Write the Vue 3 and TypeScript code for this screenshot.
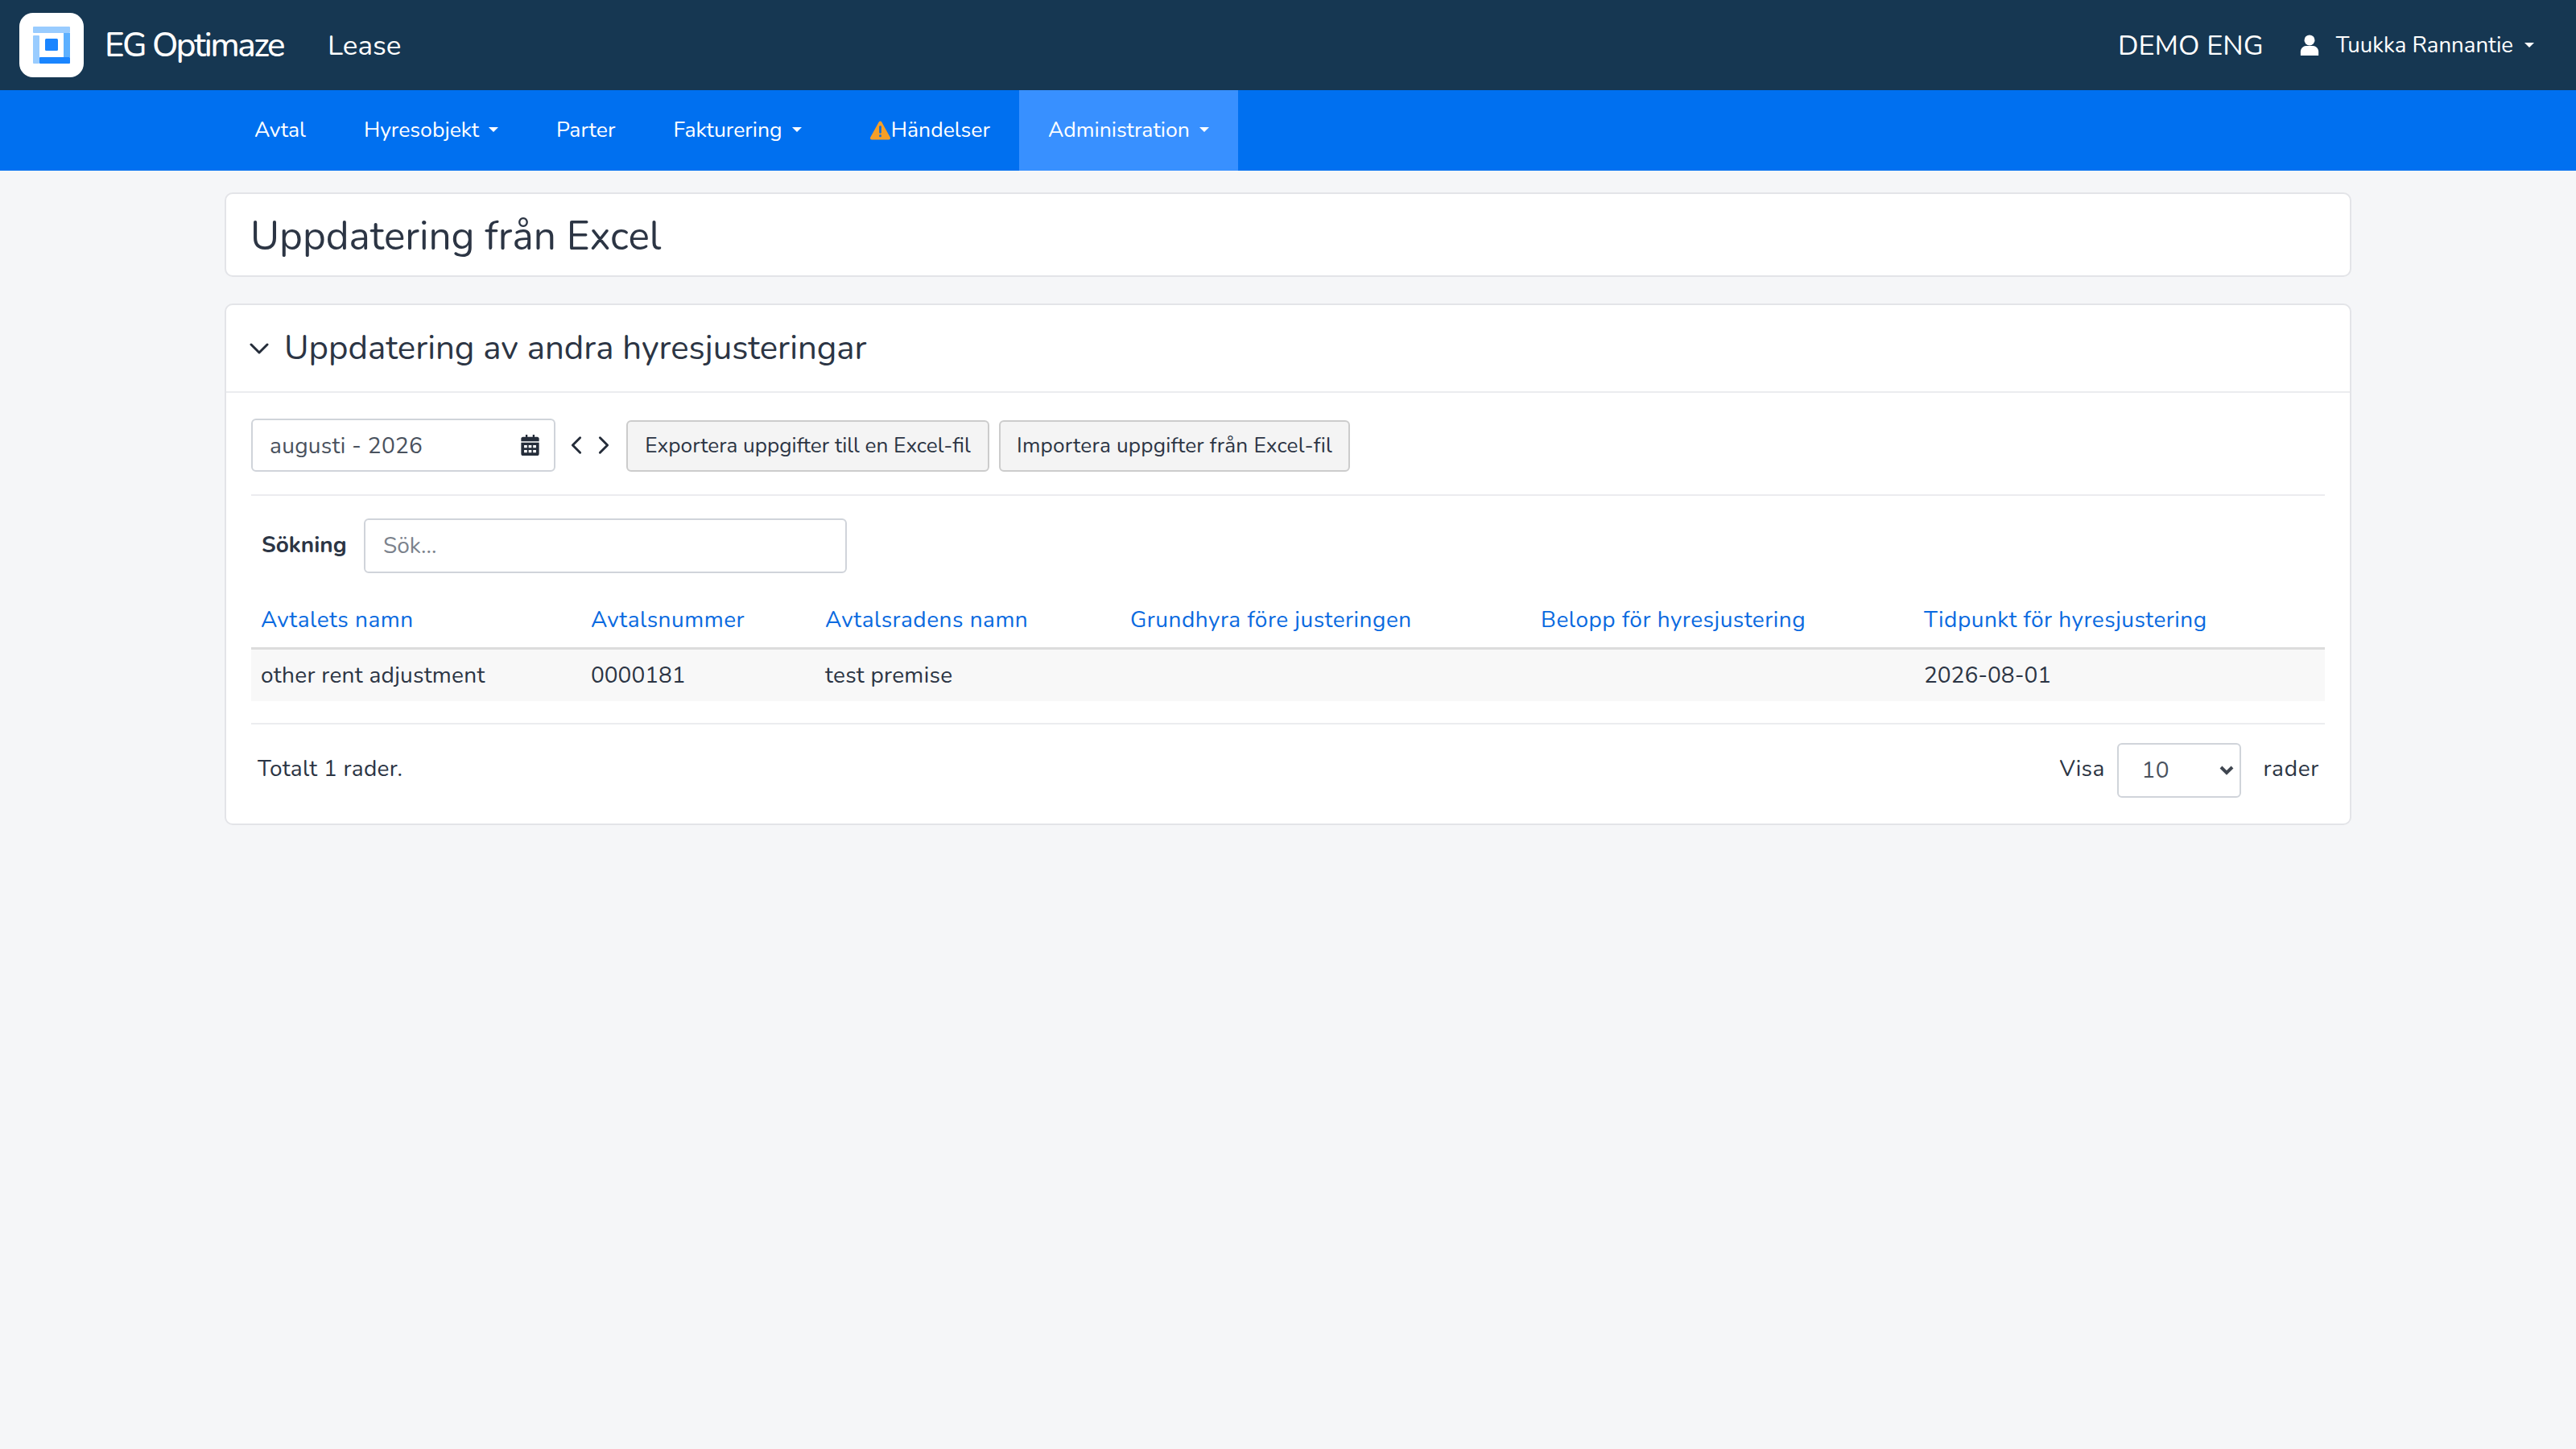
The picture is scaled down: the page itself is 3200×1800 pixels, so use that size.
<script setup lang="ts">
interface NavItem {
  label: string;
  caret?: boolean;
  warn?: boolean;
  active?: boolean;
}

const navItems: NavItem[] = [
  { label: 'Avtal' },
  { label: 'Hyresobjekt', caret: true },
  { label: 'Parter' },
  { label: 'Fakturering', caret: true },
  { label: 'Händelser', warn: true },
  { label: 'Administration', caret: true, active: true }
];

const columns = [
  { title: 'Avtalets namn', width: 410 },
  { title: 'Avtalsnummer', width: 291 },
  { title: 'Avtalsradens namn', width: 379 },
  { title: 'Grundhyra före justeringen', width: 510 },
  { title: 'Belopp för hyresjustering', width: 476 },
  { title: 'Tidpunkt för hyresjustering', width: 510 }
];

const row = ['other rent adjustment', '0000181', 'test premise', '', '', '2026-08-01'];
</script>

<template>
  <div class="page">
    <header class="topbar">
      <svg class="logo" viewBox="0 0 80 80" width="80" height="80">
        <rect width="80" height="80" rx="17" fill="#fff" />
        <rect x="17" y="17" width="46" height="8" rx="1" fill="#99ccff" />
        <rect x="55" y="25" width="8" height="30" fill="#5cb0ff" />
        <rect x="25" y="55" width="38" height="8" rx="1" fill="#1a85ff" />
        <rect x="17" y="28" width="8" height="35" rx="1" fill="#99ccff" />
        <rect x="32" y="32" width="16" height="15" rx="1.5" fill="#1a85ff" />
      </svg>
      <span class="brand">EG Optimaze</span>
      <span class="module">Lease</span>
      <span class="spacer"></span>
      <span class="tenant">DEMO ENG</span>
      <svg class="user-icon" viewBox="0 0 24 28" width="24" height="26">
        <circle cx="12" cy="7.5" r="7" fill="#fff" />
        <path d="M0 28v-5c0-5 4-8 7-8h10c3 0 7 3 7 8v5z" fill="#fff" />
      </svg>
      <span class="user-name">Tuukka Rannantie</span>
      <span class="caret user-caret"></span>
    </header>

    <nav class="navbar">
      <div class="container nav-inner">
        <a v-for="item in navItems" :key="item.label" class="nav-item" :class="{ active: item.active, warn: item.warn }">
          <svg v-if="item.warn" class="warn-icon" viewBox="0 0 26 24" width="27" height="25">
            <path d="M13 1.5c.8 0 1.4.4 1.8 1.1l10 18c.8 1.400-.1 3-1.800 3H3c-1.700 0-2.600-1.600-1.800-3l10-18c.4-.7 1-1.100 1.800-1.100z" fill="#f59f27" />
            <rect x="11.700" y="7" width="2.600" height="9" rx="1" fill="#0f6fe0" />
            <rect x="11.700" y="17.500" width="2.600" height="3" rx="1" fill="#0f6fe0" />
          </svg>
          {{ item.label }}
          <span v-if="item.caret" class="caret"></span>
        </a>
      </div>
    </nav>

    <main class="container content">
      <section class="card title-card">
        <h1>Uppdatering från Excel</h1>
      </section>

      <section class="card">
        <div class="card-header">
          <svg class="chevron" viewBox="0 0 24 14" width="24" height="14">
            <path d="M2 2l10 10L22 2" fill="none" stroke="#252d3a" stroke-width="3" stroke-linecap="round" stroke-linejoin="round" />
          </svg>
          <h2>Uppdatering av andra hyresjusteringar</h2>
        </div>

        <div class="card-body">
          <div class="toolbar">
            <div class="date-input">
              <span>augusti - 2026</span>
              <svg viewBox="0 0 24 28" width="25" height="26">
                <path d="M6 0h2.500v3h7V0H18v3h3.500C23 3 24 4 24 5.500V9H0V5.500C0 4 1 3 2.500 3H6z" fill="#252d3a" />
                <path fill-rule="evenodd" d="M0 10.500h24v15c0 1.500-1 2.500-2.500 2.500h-19C1 28 0 27 0 25.500zM4 14v3.500h4V14zm6 0v3.500h4V14zm6 0v3.500h4V14zM4 20.500V24h4v-3.500zm6 0V24h4v-3.500zm6 0V24h4v-3.500z" fill="#252d3a" />
              </svg>
            </div>
            <div class="arrows">
              <svg viewBox="0 0 16 26" width="16" height="24">
                <path d="M13 3L3 13l10 10" fill="none" stroke="#252d3a" stroke-width="3.200" stroke-linecap="round" stroke-linejoin="round" />
              </svg>
              <svg viewBox="0 0 16 26" width="16" height="24">
                <path d="M3 3l10 10L3 23" fill="none" stroke="#252d3a" stroke-width="3.200" stroke-linecap="round" stroke-linejoin="round" />
              </svg>
            </div>
            <button class="btn export">Exportera uppgifter till en Excel-fil</button>
            <button class="btn import">Importera uppgifter från Excel-fil</button>
          </div>

          <div class="search-row">
            <label>Sökning</label>
            <input class="search" type="text" placeholder="Sök..." />
          </div>

          <table class="grid">
            <colgroup>
              <col v-for="col in columns" :key="col.title" :style="{ width: col.width + 'px' }" />
            </colgroup>
            <thead>
              <tr>
                <th v-for="col in columns" :key="col.title"><a>{{ col.title }}</a></th>
              </tr>
            </thead>
            <tbody>
              <tr>
                <td v-for="(cell, i) in row" :key="i" :class="{ num: i === 1 || i === 5 }">{{ cell }}</td>
              </tr>
            </tbody>
          </table>

          <div class="footer-row">
            <span class="total">Totalt 1 rader.</span>
            <div class="pager">
              <span>Visa</span>
              <div class="page-size">
                <span>10</span>
                <svg viewBox="0 0 20 14" width="20" height="14">
                  <path d="M3 3l7 7 7-7" fill="none" stroke="#3f4650" stroke-width="4" />
                </svg>
              </div>
              <span class="rows-label">rader</span>
            </div>
          </div>
        </div>
      </section>
    </main>
  </div>
</template>

<style scoped>
.page {
  min-height: 1800px;
  background: #f5f6f8;
  color: #2c3544;
  font-family: 'Nunito', 'Lato', 'Open Sans', sans-serif;
  font-size: 28px;
}

.container {
  width: 2642px;
  margin: 0 auto;
  box-sizing: border-box;
}

.topbar {
  height: 112px;
  background: #163752;
  color: #fff;
  display: flex;
  align-items: center;
  padding: 0 52px 0 24px;
  box-sizing: border-box;
}

.logo {
  flex: none;
}

.brand {
  margin-left: 26px;
  font-size: 42px;
  font-weight: 500;
  letter-spacing: -2.4px;
}

.module {
  margin-left: 55px;
  font-size: 35px;
}

.spacer {
  flex: 1;
}

.tenant {
  font-size: 34.400px;
}

.user-icon {
  margin-left: 45px;
}

.user-name {
  margin-left: 21px;
  font-size: 27.600px;
}

.caret {
  display: inline-block;
  width: 0;
  height: 0;
  margin-left: 10px;
  vertical-align: middle;
  border-left: 6px solid transparent;
  border-right: 6px solid transparent;
  border-top: 6px solid #fff;
}

.user-caret {
  margin-left: 14px;
}

.navbar {
  height: 100px;
  background: #0070f0;
  color: #fff;
  font-size: 26.600px;
}

.nav-inner {
  display: flex;
  height: 100%;
  padding-left: 1px;
}

.nav-item {
  display: flex;
  align-items: center;
  padding: 0 36px 2px;
}

.nav-item .caret {
  margin-left: 12px;
}

.nav-item.warn {
  padding-left: 48px;
}

.nav-item.active {
  background: #3890ff;
}

.warn-icon {
  flex: none;
}

.content {
  padding-top: 27px;
}

.card {
  background: #fff;
  border: 2px solid #e3e4e8;
  border-radius: 10px;
  box-sizing: border-box;
}

.title-card {
  height: 105px;
  display: flex;
  align-items: center;
  padding: 3px 0 0 30px;
  margin-bottom: 33px;
}

h1 {
  margin: 0;
  font-size: 49.500px;
  font-weight: 400;
}

.card-header {
  height: 109px;
  display: flex;
  align-items: center;
  gap: 19px;
  padding-left: 29px;
  border-bottom: 2px solid #ebecef;
  box-sizing: border-box;
}

h2 {
  margin: 0;
  font-size: 42px;
  font-weight: 400;
}

.card-body {
  padding: 32px 31px 0;
}

.toolbar {
  display: flex;
  align-items: center;
  height: 96px;
  padding-bottom: 29px;
  box-sizing: border-box;
  border-bottom: 2px solid #ebecef;
}

.date-input {
  width: 378px;
  height: 66px;
  display: flex;
  align-items: center;
  justify-content: space-between;
  padding: 0 17px 0 21px;
  border: 2px solid #d0d4da;
  border-radius: 6px;
  box-sizing: border-box;
  color: #4a525e;
  letter-spacing: 0.3px;
}

.date-input span {
  margin-top: 2px;
}

.arrows {
  display: flex;
  gap: 18px;
  margin-left: 18px;
}

.btn {
  height: 64px;
  padding: 0;
  background: #f4f4f4;
  border: 2px solid #ccc;
  border-radius: 6px;
  color: #2c3544;
  font: inherit;
  font-size: 26.200px;
  margin-top: 2px;
}

.export {
  width: 451px;
  margin-left: 20px;
}

.import {
  width: 436px;
  margin-left: 12px;
  letter-spacing: 0.2px;
}

.search-row {
  display: flex;
  align-items: center;
  height: 68px;
  margin-top: 28px;
  padding-left: 13px;
}

label {
  font-weight: 700;
  width: 127px;
  margin-top: -3px;
}

.search {
  width: 600px;
  height: 68px;
  padding: 0 22px;
  border: 2px solid #d0d4da;
  border-radius: 6px;
  box-sizing: border-box;
  font: inherit;
  color: #2c3544;
  outline: none;
}

.search::placeholder {
  color: #7b828c;
}

.grid {
  width: 2576px;
  margin-top: 24px;
  border-collapse: collapse;
  table-layout: fixed;
}

th,
td {
  padding: 0 12px;
  text-align: left;
  font-weight: 400;
}

th {
  height: 68px;
  border-bottom: 3px solid #dcdcdc;
  color: #0a6ae0;
  letter-spacing: 0.5px;
}

td {
  height: 64px;
  background: #f8f8f8;
  letter-spacing: 0.3px;
}

td.num {
  letter-spacing: 0;
}

.footer-row {
  display: flex;
  align-items: center;
  justify-content: space-between;
  height: 125px;
  margin-top: 27px;
  padding: 1px 7px 10px 8px;
  border-top: 2px solid #ebecef;
  box-sizing: border-box;
  letter-spacing: 0.3px;
}

.total {
  margin-top: -4px;
}

.pager {
  display: flex;
  align-items: center;
}

.pager > span {
  margin-top: -4px;
}

.page-size {
  width: 154px;
  height: 68px;
  display: flex;
  align-items: center;
  justify-content: space-between;
  margin-left: 15px;
  padding: 0 6px 0 29px;
  border: 2px solid #d0d4da;
  border-radius: 6px;
  box-sizing: border-box;
  color: #4a525e;
}

.rows-label {
  margin-left: 28px;
  letter-spacing: 0.7px;
}
</style>

<style>
body {
  background: #f5f6f8;
}
</style>
